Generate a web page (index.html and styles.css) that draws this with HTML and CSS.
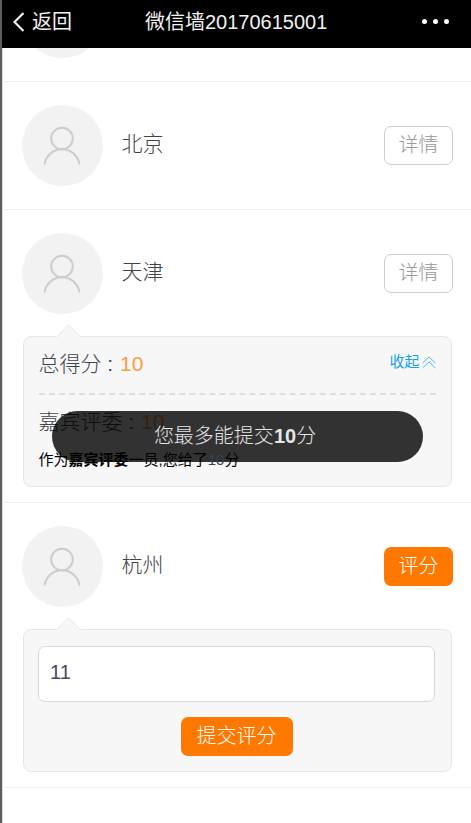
FILE: index.html
```html
<!DOCTYPE html>
<html lang="zh-CN">
<head>
<meta charset="utf-8">
<title>微信墙20170615001</title>
<link rel="stylesheet" href="styles.css">
</head>
<body>
<svg class="defs" aria-hidden="true">
  <symbol id="user" viewBox="0 0 38 40"><circle cx="19" cy="12.500" r="10.800"/><path d="M1.500 38.500C3 29.500 10 23.300 19 23.300s16 6.200 17.500 15.200"/></symbol>
</svg>
<div class="screen">
  <header class="topbar">
    <div class="back"><svg class="chevron" viewBox="0 0 12 20"><path d="M10.500 1 1.500 10l9 9"/></svg><span>返回</span></div>
    <h1 class="title">微信墙20170615001</h1>
    <div class="more"><i></i><i></i><i></i></div>
  </header>
  <main class="list">
    <section class="row row-cut"><div class="avatar"></div></section>
    <section class="row">
      <div class="person"><div class="avatar"><svg><use href="#user"/></svg></div><span class="name">北京</span><button class="btn btn-plain">详情</button></div>
    </section>
    <section class="row row-score">
      <div class="person"><div class="avatar"><svg><use href="#user"/></svg></div><span class="name">天津</span><button class="btn btn-plain">详情</button></div>
      <div class="bubble bubble-score">
        <div class="total"><span>总得分 : <b class="score">10</b></span><a class="fold">收起<svg viewBox="0 0 14 13"><path d="M.5 7 7 1l6.500 6M.5 12 7 6l6.500 6"/></svg></a></div>
        <p class="judge">嘉宾评委 : <b class="score">10</b></p>
        <p class="note">作为<strong>嘉宾评委</strong>一员,您给了<span class="given">10</span>分</p>
        <div class="toast">您最多能提交<b>10</b>分</div>
      </div>
    </section>
    <section class="row row-form">
      <div class="person"><div class="avatar"><svg><use href="#user"/></svg></div><span class="name">杭州</span><button class="btn btn-fill">评分</button></div>
      <div class="bubble bubble-form">
        <input class="field" value="11">
        <button class="btn btn-fill">提交评分</button>
      </div>
    </section>
  </main>
</div>
</body>
</html>
```
FILE: styles.css
```css
* { box-sizing: border-box; }
body { margin: 0; background: #fff; font-family: "Liberation Sans", "Noto Sans CJK SC", sans-serif; color: #40434a; font-weight: 300; }
p, h1 { margin: 0; }
.defs { position: absolute; width: 0; height: 0; }
.screen { height: 823px; overflow: hidden; border-left: 2px solid #5e5e5e; box-shadow: inset 1px 0 #ddd; }
.topbar { height: 48px; background: #000; color: #f2f2f2; display: flex; align-items: center; padding: 0 22px 5px 11px; }
.back { display: flex; align-items: center; gap: 7px; width: 132px; font-size: 20px; line-height: 30px; font-weight: 400; }
.chevron { width: 12px; height: 20px; fill: none; stroke: #eee; stroke-width: 2.2; }
.title { flex: 1; font-size: 20px; line-height: 30px; font-weight: 400; }
.more { display: flex; gap: 6px; }
.more i { width: 5px; height: 5px; border-radius: 50%; background: #fff; }
.row { padding: 23px 18px 0 19.5px; border-bottom: 1px solid #eee; box-sizing: content-box; height: 104px; }
.row-cut { height: 33px; padding-top: 0; overflow: hidden; }
.row-cut .avatar { margin-top: -71px; }
.row-score { height: 269px; }
.row-form { height: 261px; }
.person { height: 81px; display: flex; align-items: center; }
.avatar { width: 81px; height: 81px; border-radius: 50%; background: #f2f2f2; display: flex; justify-content: center; padding-top: 21px; flex: none; }
.avatar svg { width: 38px; height: 40px; fill: none; stroke: #ccc; stroke-width: 2; }
.name { margin: -3px auto 0 19px; font-size: 21px; line-height: 30px; }
.btn { height: 39px; margin: 0; padding: 0 0 1px; font: inherit; font-size: 20px; line-height: 36px; border-radius: 7px; border: 0; }
.person .btn { width: 69px; }
.btn-plain { border: 1px solid #ccc; background: #fff; color: #999; }
.btn-fill { background: #ff7800; color: #fff; }
.bubble { position: relative; width: 429px; margin: 22px 0 0 1px; padding: 0 16px; background: #f7f7f7; border: 1px solid #e6e6e6; border-radius: 8px; }
.bubble::before { content: ""; position: absolute; left: 35px; top: -9px; width: 18px; height: 18px; background: #f7f7f7; border: solid #ececec; border-width: 1px 0 0 1px; transform: rotate(45deg); clip-path: polygon(0 0, 100% 0, 0 100%); }
.bubble-score { height: 151px; }
.total { width: 397px; margin-left: -1px; height: 58px; border-bottom: 2px dashed #ddd; display: flex; justify-content: space-between; font-size: 21px; line-height: 54px; }
.score { margin-left: 1px; color: #ff9d3c; font-weight: 400; }
.fold { color: #12a4ef; font-size: 15px; line-height: 50px; font-weight: 400; display: flex; align-items: center; gap: 2px; height: 50px; }
.fold svg { width: 14px; height: 13px; fill: none; stroke: #55bdf5; stroke-width: 1; }
.judge { margin: 11px 0 0 -1px; font-size: 21px; line-height: 32px; }
.note { position: relative; z-index: 2; margin: 10px 0 0 -1px; font-size: 15px; line-height: 24px; font-weight: 400; color: #000; }
.note strong { font-weight: 700; }
.given { color: #345; }
.toast { position: absolute; z-index: 1; left: 28px; top: 74px; width: 371px; height: 51px; border-radius: 26px; background: rgba(0,0,0,.8); color: #e5e5e5; font-size: 20px; line-height: 50px; text-align: center; padding-right: 4px; }
.toast b { font-weight: 700; }
.bubble-form { height: 143px; display: flex; flex-direction: column; align-items: center; padding-top: 16px; }
.field { width: 397px; height: 56px; flex: none; margin: 0 0 15px -1px; padding: 0 11px 3px; border: 1px solid #d8d8d8; border-radius: 7px; background: #fff; font: inherit; font-size: 20px; color: #444b60; }
.bubble-form .btn { width: 112px; margin-left: -1px; }
```
